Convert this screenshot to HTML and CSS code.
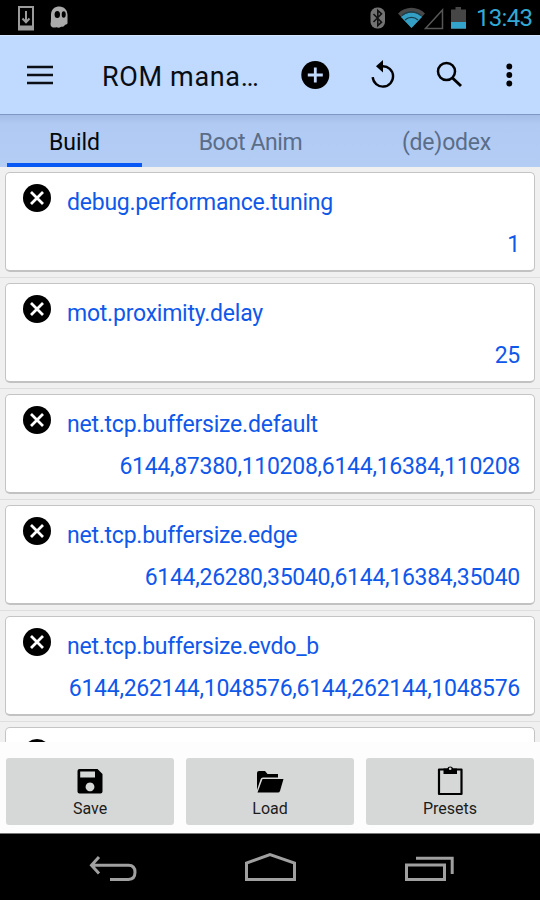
FILE: index.html
```
<!DOCTYPE html>
<html lang="en">
<head>
<meta charset="utf-8">
<title>ROM manager</title>
<link rel="stylesheet" href="styles.css">
</head>
<body>
<svg class="defs" width="0" height="0">
  <symbol id="remove" viewBox="0 0 28 28"><circle cx="14" cy="14" r="14" fill="#000"/><path d="M8 8l12 12M20 8L8 20" stroke="#fff" stroke-width="2.800"/></symbol>
</svg>
<div class="status">
  <svg class="status-left" width="80" height="35" viewBox="0 0 80 35">
    <path d="M19 7h14v22.500H19z" fill="none" stroke="#9b9b9b" stroke-width="2"/>
    <path d="M18 25.500h16v4.500H18z" fill="#9b9b9b"/>
    <path d="M26 11v11M22.500 18.500l3.500 3.800 3.500-3.800" fill="none" stroke="#9b9b9b" stroke-width="2"/>
    <path d="M51 15C51 9 55 6.500 59.500 6.500S67.500 10 67.500 15v8.500c-1 1.500-2 .5-3 2-1 2-3 .5-4.500 2-2 .5-3-.5-4.500 0-2.500.5-5-.5-5-3.500.5-2 .5-5 .5-9z" fill="#aaa"/>
    <ellipse cx="57.300" cy="14.500" rx="2.700" ry="3.500" fill="#000"/><ellipse cx="63.700" cy="14.500" rx="2" ry="3.200" fill="#000"/>
  </svg>
  <svg width="110" height="35" viewBox="366 0 110 35">
    <rect x="370.500" y="7.500" width="14.500" height="21" rx="6.500" fill="#737373"/>
    <path d="M373.500 14l8 8.200-3.700 3.500V10.500l3.700 3.400-8 8.100" fill="none" stroke="#111" stroke-width="1.600"/>
    <path d="M398 13.500a18.500 18.500 0 0 1 27 0L411.500 28z" fill="#484848"/>
    <path d="M401 17a15 15 0 0 1 21 0L411.500 28z" fill="#349fc5"/>
    <path d="M402 15.500a14 14 0 0 1 19 0M405 20a9.500 9.500 0 0 1 13 0" fill="none" stroke="#173e4c" stroke-width="1.300"/>
    <path d="M425.500 28.500h17V10z" fill="none" stroke="#565656" stroke-width="1.500"/>
    <path d="M451 9.500h4.500V7h5.500v2.500h5V29h-15z" fill="#464646"/><path d="M451 22h15v6.500h-15z" fill="#33a4cb"/>
  </svg>
  <span class="clock">13:43</span>
</div>
<header class="bar">
  <svg class="menu" width="28" height="20" viewBox="0 0 28 20"><path d="M1 2h26M1 10h26M1 18h26" stroke="#0b0f16" stroke-width="2.300"/></svg>
  <h1>ROM mana…</h1>
  <svg class="actions" width="240" height="78" viewBox="300 36 240 78">
    <circle cx="316.300" cy="75" r="14" fill="#000"/><path d="M316.300 67.500v15M308.800 75h15" stroke="#c2d9fc" stroke-width="2.800"/>
    <path d="M383.500 66.200a10.200 10.200 0 1 1-9.800 11" fill="none" stroke="#000" stroke-width="2.400"/><path d="M384 60v12.500l-7-6.300z" fill="#000"/>
    <circle cx="447.500" cy="71.500" r="8.500" fill="none" stroke="#000" stroke-width="2.500"/><path d="M453.500 78l8.500 8" stroke="#000" stroke-width="3"/>
    <circle cx="510.300" cy="66.500" r="2.900"/><circle cx="510.300" cy="75" r="2.900"/><circle cx="510.300" cy="83.500" r="2.900"/>
  </svg>
</header>
<nav class="tabs">
  <span class="tab active">Build</span>
  <span class="tab boot">Boot Anim</span>
  <span class="tab odex">(de)odex</span>
</nav>
<main class="list">
  <section class="row"><div class="card"><svg class="x" width="28" height="28"><use href="#remove"/></svg><div class="name">debug.performance.tuning</div><div class="value">1</div></div></section>
  <section class="row"><div class="card"><svg class="x" width="28" height="28"><use href="#remove"/></svg><div class="name">mot.proximity.delay</div><div class="value">25</div></div></section>
  <section class="row"><div class="card"><svg class="x" width="28" height="28"><use href="#remove"/></svg><div class="name">net.tcp.buffersize.default</div><div class="value">6144,87380,110208,6144,16384,110208</div></div></section>
  <section class="row"><div class="card"><svg class="x" width="28" height="28"><use href="#remove"/></svg><div class="name">net.tcp.buffersize.edge</div><div class="value">6144,26280,35040,6144,16384,35040</div></div></section>
  <section class="row"><div class="card"><svg class="x" width="28" height="28"><use href="#remove"/></svg><div class="name">net.tcp.buffersize.evdo_b</div><div class="value">6144,262144,1048576,6144,262144,1048576</div></div></section>
  <section class="row"><div class="card"><svg class="x" width="28" height="28"><use href="#remove"/></svg></div></section>
</main>
<footer class="buttons">
  <button class="btn"><svg width="32" height="32" viewBox="0 0 32 32"><path fill-rule="evenodd" d="M5.500 4h18l5 5v17.500q0 2-2 2h-21q-2 0-2-2V6q0-2 2-2zM6.200 6.500v6H21v-6zM16 17.500a4.400 4.400 0 1 0 .01 0z"/></svg><span>Save</span></button>
  <button class="btn"><svg width="32" height="32" viewBox="0 0 32 32"><path d="M3 25V8q0-2 2-2h6l2.500 3h10.500v3.500H9q-2 0-2.500 2z"/><path d="M8.500 14H29.500L26 26q-.5 1.500-2 1.500H3.500z"/></svg><span>Load</span></button>
  <button class="btn"><svg width="32" height="32" viewBox="0 0 32 32"><path d="M5 4.500h22.500V29H5z" fill="none" stroke="#000" stroke-width="2.200" stroke-linejoin="round"/><path d="M9.500 3.500h3.700a3.200 3.200 0 0 1 6 0H23v5.500H9.500z"/><circle cx="16.200" cy="3.800" r="1.300" fill="#d6d8d7"/></svg><span>Presets</span></button>
</footer>
<div class="system">
  <svg width="540" height="66" viewBox="0 834 540 66" fill="none" stroke="#a0a0a0" stroke-width="3">
    <path d="M99 857l-7.500 8.200L99 873.500M92 865.200h36.500q6.500 0 6.500 7t-6.500 7.300H110"/>
    <path d="M246.500 879.500v-16.500L270 854.500l24.500 8.500v16.500z"/>
    <path d="M406.500 865h38v14.500h-38zM416 858.300h36.200V874"/>
  </svg>
</div>
</body>
</html>
```
FILE: styles.css
```
* { box-sizing: border-box; }
body {
  margin: 0;
  width: 540px;
  height: 900px;
  overflow: hidden;
  display: flex;
  flex-direction: column;
  background: #fdfdfd;
  font-family: Roboto, "Liberation Sans", sans-serif;
}
svg { display: block; flex: none; }
.defs { display: none; }
.status {
  flex: 0 0 35px;
  background: #000;
  display: flex;
}
.status-left { margin-right: 286px; }
.clock {
  font-size: 24px;
  height: 35px;
  line-height: 37px;
  padding-top: 0;
  color: #33a9d6;
  letter-spacing: -0.7px;
}
.bar {
  flex: 0 0 80px;
  display: flex;
  align-items: center;
  background: #c0d9fe;
  border-top: 1px solid #d4e5ff;
  border-bottom: 1px solid #7f98c3;
}
.menu { margin-left: 26px; }
h1 {
  width: 197px;
  margin: 4px 0 0 48px;
  font-size: 27px;
  line-height: 36px;
  font-weight: 400;
  letter-spacing: 0.65px;
  color: #080d14;
  white-space: nowrap;
}
.tabs {
  flex: 0 0 52px;
  display: grid;
  grid-template-columns: 135px 188px 188px;
  padding: 0 7px;
  background: linear-gradient(#a4bde7, #b0caf3 9px, #b3cdf5);
}
.tab {
  text-align: center;
  font-size: 23px;
  line-height: 56px;
  letter-spacing: -0.4px;
  color: #5b6d88;
  height: 52px;
}
.active { color: #05080d; border-bottom: 4px solid #0758f5; letter-spacing: 0; }
.boot { padding-left: 29px; }
.odex { padding-left: 45px; letter-spacing: -0.2px; }
.list { flex: 0 0 575px; overflow: hidden; background: #f0f0f0; }
.row {
  height: 111px;
  padding: 5px;
  border-bottom: 1px solid #dedede;
}
.card {
  height: 100px;
  display: grid;
  grid-template-columns: 62px 1fr;
  grid-template-rows: 49px 1fr;
  background: #fff;
  border: 1px solid #c4c4c4;
  border-bottom: 2px solid #c2c2c2;
  border-radius: 5px;
}
.x { margin: 11px 0 0 17px; }
.name, .value {
  color: #0f58ea;
  font-size: 23px;
  letter-spacing: -0.23px;
  white-space: nowrap;
}
.name { line-height: 60px; margin-left: -1px; }
.value {
  grid-column: 1 / 3;
  text-align: right;
  padding-right: 14px;
  line-height: 45px;
  letter-spacing: -0.28px;
}
.buttons {
  flex: 0 0 91px;
  display: grid;
  grid-template-columns: repeat(3, 168px);
  gap: 12px;
  padding: 16px 6px 8px;
  background: #fdfdfd;
}
.btn {
  display: flex;
  flex-direction: column;
  align-items: center;
  border: 0;
  padding: 7px 0 0;
  border-radius: 3px;
  background: #d6d8d7;
  font: 16px/24px Roboto, "Liberation Sans", sans-serif;
  color: #1c1c1c;
  height: 67px;
}
.system { flex: 1; background: #000; border-top: 1px solid #777; }
```
